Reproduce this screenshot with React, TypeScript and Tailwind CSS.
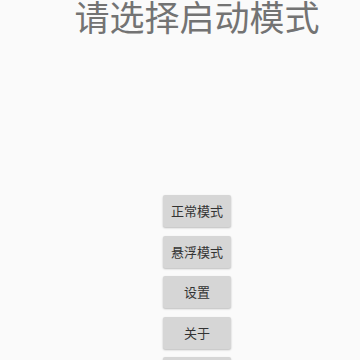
export default function App() {
  const buttons = ["正常模式", "悬浮模式", "设置", "关于", "退出"];
  return (
    <div
      className="flex h-[360px] w-[360px] flex-col items-center overflow-hidden bg-[#fafafa] pl-[34px]"
      style={{ fontFamily: '"Noto Sans CJK SC", "Noto Sans", sans-serif' }}
    >
      <h1 className="mt-[-8px] text-[35px] leading-[48px] font-normal text-[#737373]">
        请选择启动模式
      </h1>
      <div className="mt-[155px] flex flex-col items-center gap-[8.5px]">
        {buttons.map((label) => (
          <button
            key={label}
            className="h-[32px] w-[68px] rounded-[2px] bg-[#d6d6d6] text-[13px] text-[#333333] shadow-[0_1px_2px_rgba(0,0,0,0.25)]"
          >
            {label}
          </button>
        ))}
      </div>
    </div>
  );
}
